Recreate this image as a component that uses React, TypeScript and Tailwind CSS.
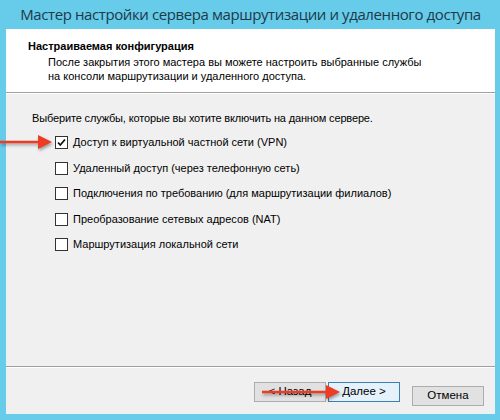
import { ReactNode } from "react";

const services = [
  { label: "Доступ к виртуальной частной сети (VPN)", checked: true },
  { label: "Удаленный доступ (через телефонную сеть)", checked: false },
  { label: "Подключения по требованию (для маршрутизации филиалов)", checked: false },
  { label: "Преобразование сетевых адресов (NAT)", checked: false },
  { label: "Маршрутизация локальной сети", checked: false },
];

const CheckBox = ({ checked }: { checked: boolean }) => (
  <span className="w-[13px] h-[13px] border border-[#333] bg-white flex items-center justify-center shrink-0">
    {checked && (
      <svg width="9" height="9" viewBox="0 0 9 9">
        <path d="M1 4.5 L3.3 7 L8 1.5" stroke="#111" strokeWidth="1.8" fill="none" />
      </svg>
    )}
  </span>
);

const Button = ({ children, primary }: { children: ReactNode; primary?: boolean }) => (
  <button
    className={
      primary
        ? "w-[72px] h-[20px] border border-[#3c7fb1] bg-[#e5f1fb] text-[11.5px] leading-none text-black"
        : "w-[72px] h-[20px] border border-[#adadad] bg-[#e1e1e1] text-[11.5px] leading-none text-black"
    }
  >
    {children}
  </button>
);

const Arrow = ({ width, className }: { width: number; className: string }) => (
  <svg
    width={width + 4}
    height="20"
    viewBox={`0 0 ${width + 4} 20`}
    className={className}
    style={{ filter: "drop-shadow(1px 2px 1.5px rgba(0,0,0,0.35))" }}
  >
    <line x1="0" y1="10" x2={width - 10} y2="10" stroke="#ee3b24" strokeWidth="2.5" />
    <path d={`M${width - 14} 3 L${width} 10 L${width - 14} 17 Z`} fill="#ee3b24" />
  </svg>
);

export default function App() {
  return (
    <div
      className="relative w-[500px] h-[420px] bg-[#67cbea] pl-[6px] pr-[5px] pb-[6px] flex flex-col"
      style={{ fontFamily: '"Liberation Sans", Arial, sans-serif' }}
    >
      <div className="h-[29px] flex items-center justify-center shrink-0">
        <span
          className="text-[15px] tracking-[-0.4px] text-[#1d3a48] leading-none whitespace-nowrap"
          style={{ fontFamily: '"Open Sans", "Noto Sans", sans-serif' }}
        >
          Мастер настройки сервера маршрутизации и удаленного доступа
        </span>
      </div>

      <div className="flex-1 flex flex-col bg-[#f0f0f0]">
        <div className="h-[63px] bg-white pl-[22px] pt-[11px] text-[11px] text-black">
          <div className="font-bold leading-[13px]">Настраиваемая конфигурация</div>
          <div className="pl-[20px] mt-[2px] leading-[14px]">
            После закрытия этого мастера вы можете настроить выбранные службы
            <br />
            на консоли маршрутизации и удаленного доступа.
          </div>
        </div>
        <div className="h-px bg-[#a0a0a0]" />
        <div className="h-px bg-white" />

        <div className="h-[272px] pl-[26px] pt-[18px] text-[11px] text-black">
          <div className="leading-[13px] tracking-[-0.15px]">
            Выберите службы, которые вы хотите включить на данном сервере.
          </div>
          <div className="flex flex-col gap-[12.5px] pl-[23px] mt-[11px]">
            {services.map((s) => (
              <div key={s.label} className="flex items-center gap-[5px] h-[13px]">
                <CheckBox checked={s.checked} />
                <span className="leading-[13px]">{s.label}</span>
              </div>
            ))}
          </div>
        </div>

        <div className="h-px bg-[#a0a0a0]" />
        <div className="h-px bg-white" />
        <div className="flex-1 flex items-start justify-end pt-[14px] pr-[11px]">
          <div className="flex gap-[2px]">
            <Button>&lt; Назад</Button>
            <Button primary>Далее &gt;</Button>
          </div>
          <div className="ml-[12px]">
            <Button>Отмена</Button>
          </div>
        </div>
      </div>

      <Arrow width={52} className="absolute left-0 top-[132px]" />
      <Arrow width={78} className="absolute left-[262px] top-[382px]" />
    </div>
  );
}
